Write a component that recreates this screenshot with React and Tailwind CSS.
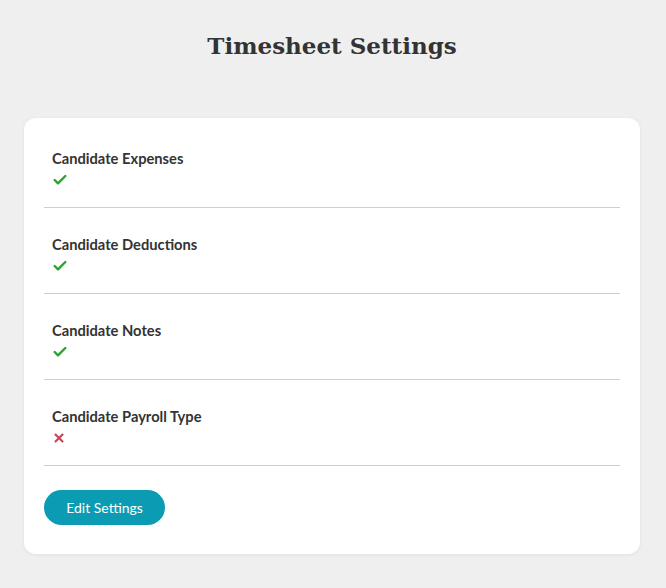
import { Check, X } from "lucide-react";

const settings = [
  { label: "Candidate Expenses", enabled: true },
  { label: "Candidate Deductions", enabled: true },
  { label: "Candidate Notes", enabled: true },
  { label: "Candidate Payroll Type", enabled: false },
];

export default function App() {
  return (
    <div className="min-h-[588px] bg-[#efefef] pl-6 pr-[26px] pt-[29px] pb-[34px] text-[#333]" style={{ fontFamily: "Lato, 'Open Sans', sans-serif" }}>
      <h1
        className="text-center text-[23px] font-bold leading-[34px] text-[#333]"
        style={{ fontFamily: "'DejaVu Serif', 'Liberation Serif', serif" }}
      >
        Timesheet Settings
      </h1>

      <div className="mt-[55px] rounded-xl bg-white px-5 pt-[30px] pb-[29px] shadow-[0_1px_4px_rgba(0,0,0,0.06)]">
        {settings.map((item, i) => (
          <div
            key={item.label}
            className={`border-b border-[#cfcfcf] px-2 pb-[15px] ${i === 0 ? "" : "pt-[26px]"}`}
          >
            <p className="text-[14.7px] font-bold leading-5 text-[#333]">{item.label}</p>
            <div className="flex h-6 items-center">
              {item.enabled ? (
                <Check size={16} strokeWidth={3.6} className="text-[#2aa52a]" />
              ) : (
                <X size={14} strokeWidth={3.6} className="text-[#c9465a]" />
              )}
            </div>
          </div>
        ))}

        <button className="mt-[24px] h-[35px] w-[121px] rounded-full bg-[#0b9cb3] text-[14px] text-white">
          Edit Settings
        </button>
      </div>
    </div>
  );
}
